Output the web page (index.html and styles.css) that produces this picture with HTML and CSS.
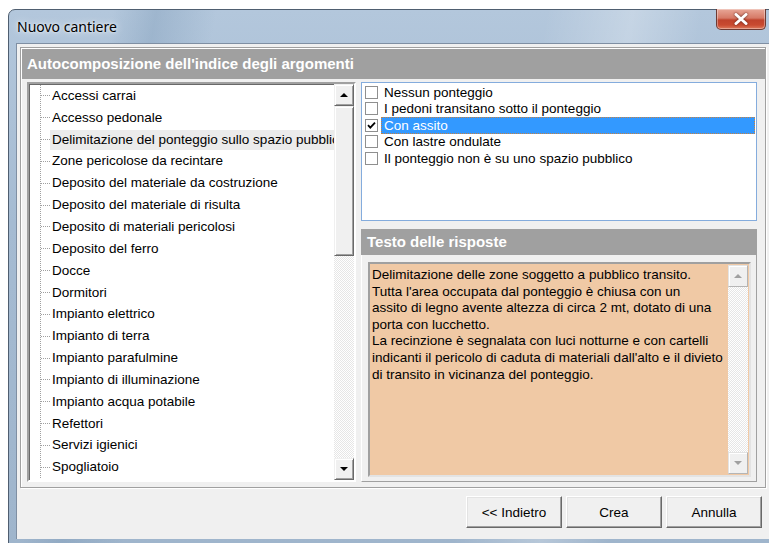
FILE: index.html
```html
<!DOCTYPE html>
<html lang="it">
<head>
<meta charset="utf-8">
<title>Nuovo cantiere</title>
<link rel="stylesheet" href="styles.css">
</head>
<body>
<div class="window">
  <div class="titlebar">
    <span class="title">Nuovo cantiere</span>
    <div class="close-btn">
      <svg width="16" height="12" viewBox="0 0 16 12"><path d="M3 1.5 L13 10.5 M13 1.5 L3 10.5" stroke="#fff" stroke-width="3" stroke-linecap="round"/></svg>
    </div>
  </div>
  <div class="client">
    <div class="group">
      <div class="group-header">Autocomposizione dell'indice degli argomenti</div>
      <div class="group-body">
        <div class="tree-box">
          <div class="tree-view">
            <ul class="tree">
              <li><span>Accessi carrai</span></li>
              <li><span>Accesso pedonale</span></li>
              <li class="current"><span>Delimitazione del ponteggio sullo spazio pubblico</span></li>
              <li><span>Zone pericolose da recintare</span></li>
              <li><span>Deposito del materiale da costruzione</span></li>
              <li><span>Deposito del materiale di risulta</span></li>
              <li><span>Deposito di materiali pericolosi</span></li>
              <li><span>Deposito del ferro</span></li>
              <li><span>Docce</span></li>
              <li><span>Dormitori</span></li>
              <li><span>Impianto elettrico</span></li>
              <li><span>Impianto di terra</span></li>
              <li><span>Impianto parafulmine</span></li>
              <li><span>Impianto di illuminazione</span></li>
              <li><span>Impianto acqua potabile</span></li>
              <li><span>Refettori</span></li>
              <li><span>Servizi igienici</span></li>
              <li><span>Spogliatoio</span></li>
            </ul>
          </div>
          <div class="vscroll">
            <div class="sb-btn"><span class="arrow up"></span></div>
            <div class="sb-thumb"></div>
            <div class="sb-track"></div>
            <div class="sb-btn"><span class="arrow down"></span></div>
          </div>
        </div>
        <div class="right-col">
          <ul class="check-list">
            <li><span class="cb"></span><span class="label">Nessun ponteggio</span></li>
            <li><span class="cb"></span><span class="label">I pedoni transitano sotto il ponteggio</span></li>
            <li class="selected"><span class="cb checked"><svg width="9" height="9" viewBox="0 0 9 9"><path d="M1 4.2 L3.3 6.6 L8 1.6" fill="none" stroke="#000" stroke-width="1.8"/></svg></span><span class="label">Con assito</span></li>
            <li><span class="cb"></span><span class="label">Con lastre ondulate</span></li>
            <li><span class="cb"></span><span class="label">Il ponteggio non è su uno spazio pubblico</span></li>
          </ul>
          <div class="answers-header">Testo delle risposte</div>
          <div class="answers-panel">
            <div class="answer-box">
              <div class="answer-text">Delimitazione delle zone soggetto a pubblico transito.<br>Tutta l'area occupata dal ponteggio è chiusa con un<br>assito di legno avente altezza di circa 2 mt, dotato di una<br>porta con lucchetto.<br>La recinzione è segnalata con luci notturne e con cartelli<br>indicanti il pericolo di caduta di materiali dall'alto e il divieto<br>di transito in vicinanza del ponteggio.</div>
              <div class="vscroll disabled">
                <div class="sb-btn"><span class="arrow up"></span></div>
                <div class="sb-track"></div>
                <div class="sb-btn"><span class="arrow down"></span></div>
              </div>
            </div>
          </div>
        </div>
      </div>
    </div>
    <div class="buttons">
      <button class="btn">&lt;&lt; Indietro</button>
      <button class="btn">Crea</button>
      <button class="btn">Annulla</button>
    </div>
  </div>
</div>
</body>
</html>
```
FILE: styles.css
```css
html, body {
  margin: 0;
  padding: 0;
}

body {
  width: 769px;
  height: 543px;
  overflow: hidden;
  background: #ffffff;
  font-family: "Liberation Sans", Arial, sans-serif;
  font-size: 13.5px;
  color: #000;
}

ul {
  list-style: none;
  margin: 0;
  padding: 0;
}

/* Window frame (Aero glass) */
.window {
  box-sizing: border-box;
  margin: 9px 0 0 8px;
  width: 775px;
  height: 536px;
  border: 1px solid #4f5e70;
  border-radius: 7px 7px 0 0;
  background:
    linear-gradient(100deg, rgba(255,255,255,0) 0%, rgba(255,255,255,0) 12%, rgba(120,150,180,0.35) 17%, rgba(255,255,255,0) 24%, rgba(255,255,255,0) 62%, rgba(255,255,255,0.25) 72%, rgba(255,255,255,0) 80%),
    linear-gradient(180deg, #b3c7dc 0%, #a5bbd2 40%, #9fb5cc 100%);
  padding: 0 0 5px 7px;
  display: flex;
  flex-direction: column;
}

.titlebar {
  height: 33px;
  display: flex;
  align-items: flex-start;
  flex: none;
}

.title {
  font-family: "Noto Sans", "Open Sans", sans-serif;
  font-size: 14px;
  color: #000;
  margin: 7px 0 0 1px;
  text-shadow: 0 0 8px rgba(255,255,255,0.9), 0 0 3px rgba(255,255,255,0.9);
}

.close-btn {
  margin-left: auto;
  margin-right: 16px;
  margin-top: -1px;
  width: 50px;
  height: 21px;
  box-sizing: border-box;
  border: 1px solid #6e3a32;
  border-top: none;
  border-radius: 0 0 5px 5px;
  background: linear-gradient(180deg, #e8a797 0%, #d67a67 45%, #c0432c 55%, #c94a30 80%, #dd7a5c 100%);
  display: flex;
  align-items: center;
  justify-content: center;
  box-shadow: inset 0 0 0 1px rgba(255,255,255,0.35);
}

.close-btn svg {
  filter: drop-shadow(0 0 1px #5a2016);
}

/* Client area */
.client {
  flex: 1;
  background: #f0f0f0;
  border: 1px solid #7f8fa3;
  border-right: none;
  border-bottom: none;
  display: flex;
  flex-direction: column;
}

.group {
  box-sizing: border-box;
  margin: 3px 0 0 3px;
  width: 746px;
  height: 441px;
  border: 1px solid #a0a0a0;
  box-shadow: inset 1px 1px 0 #ffffff, 1px 1px 0 #ffffff;
  display: flex;
  flex-direction: column;
}

.group-header {
  height: 30px;
  margin: 1px 0 0 1px;
  background: #a0a0a0;
  color: #fff;
  font-weight: bold;
  font-size: 15px;
  line-height: 30px;
  padding-left: 5px;
  flex: none;
}

.group-body {
  flex: 1;
  display: flex;
  gap: 5px;
  padding: 3px 7px 5px 6px;
  min-height: 0;
}

/* Tree view */
.tree-box {
  box-sizing: border-box;
  width: 329px;
  border-style: solid;
  border-width: 2px;
  border-color: #a0a0a0 #ffffff #ffffff #a0a0a0;
  box-shadow: inset 1px 1px 0 #696969;
  background: #fff;
  display: flex;
  overflow: hidden;
}

.tree-view {
  flex: 1;
  overflow: hidden;
  padding-top: 1px;
}

.tree {
  margin-left: 11px;
  border-left: 1px dotted #a0a0a0;
}

.tree li {
  height: 21.85px;
  display: flex;
  align-items: center;
  white-space: nowrap;
}

.tree li::before {
  content: "";
  width: 9px;
  flex: none;
  border-top: 1px dotted #a0a0a0;
}

.tree li span {
  padding: 2px 2px 3px 2px;
}

.tree li.current span {
  background: #ebebeb;
  flex: 1;
  overflow: hidden;
}

/* Scrollbars */
.vscroll {
  width: 20px;
  flex: none;
  display: flex;
  flex-direction: column;
}

.sb-btn,
.sb-thumb {
  box-sizing: border-box;
  background: #f0f0f0;
  border-style: solid;
  border-width: 1px;
  border-color: #f0f0f0 #696969 #696969 #f0f0f0;
  box-shadow: inset 1px 1px 0 #ffffff, inset -1px -1px 0 #a0a0a0;
  flex: none;
}

.sb-btn {
  height: 22px;
  display: flex;
  align-items: center;
  justify-content: center;
}

.sb-thumb {
  height: 150px;
}

.sb-track {
  flex: 1;
  background: repeating-conic-gradient(#ffffff 0 25%, #e6e6e6 0 50%) 0 0 / 2px 2px;
}

.arrow {
  width: 0;
  height: 0;
  border-left: 4px solid transparent;
  border-right: 4px solid transparent;
}

.arrow.up {
  border-bottom: 4px solid #000;
}

.arrow.down {
  border-top: 4px solid #000;
}

.vscroll.disabled .arrow.up {
  border-bottom-color: #a0a0a0;
}

.vscroll.disabled .arrow.down {
  border-top-color: #a0a0a0;
}

.vscroll.disabled .sb-btn {
  border-color: #e3e3e3 #b5b5b5 #b5b5b5 #e3e3e3;
  box-shadow: inset 1px 1px 0 #ffffff;
}

/* Right column */
.right-col {
  width: 396px;
  display: flex;
  flex-direction: column;
}

.check-list {
  box-sizing: border-box;
  height: 139px;
  border: 1px solid #84acdd;
  background: #fff;
  padding: 1px 1px 0 3px;
  flex: none;
}

.check-list li {
  height: 16.5px;
  display: flex;
  align-items: center;
  white-space: nowrap;
}

.cb {
  box-sizing: border-box;
  width: 13px;
  height: 13px;
  border: 1px solid #8f8f8f;
  background: #fff;
  flex: none;
  display: flex;
  align-items: center;
  justify-content: center;
}

.label {
  margin-left: 3px;
  padding-left: 2px;
  line-height: 15px;
  flex: 1;
  border: 1px solid transparent;
}

.check-list li.selected .label {
  background: #3399ff;
  color: #fff;
  border: 1px dotted #c68142;
}

.answers-header {
  margin-top: 8px;
  height: 26px;
  background: #a0a0a0;
  color: #fff;
  font-weight: bold;
  font-size: 15px;
  line-height: 26px;
  padding-left: 6px;
  flex: none;
}

.answers-panel {
  flex: 1;
  box-sizing: border-box;
  border: 1px solid #ffffff;
  border-top: none;
  border-right-color: #a0a0a0;
  border-bottom-color: #a0a0a0;
  padding: 7px 5px 4px 6px;
  display: flex;
}

.answer-box {
  flex: 1;
  background: #f0c9a5;
  border-style: solid;
  border-width: 2px;
  border-color: #a0a0a0 #e3e3e3 #e3e3e3 #a0a0a0;
  display: flex;
  padding: 1px 1px 1px 0;
}

.answer-text {
  flex: 1;
  padding: 2px 0 0 2px;
  line-height: 16.6px;
  white-space: nowrap;
  overflow: hidden;
}

/* Dialog buttons */
.buttons {
  width: 745px;
  margin: 8px 0 0 3px;
  display: flex;
  justify-content: flex-end;
  gap: 4px;
  padding-right: 3px;
  box-sizing: border-box;
}

.btn {
  box-sizing: border-box;
  width: 96px;
  height: 32px;
  font-family: "Liberation Sans", Arial, sans-serif;
  font-size: 13.5px;
  color: #000;
  background: #f0f0f0;
  border-style: solid;
  border-width: 1px;
  border-color: #ffffff #696969 #696969 #ffffff;
  box-shadow: inset -1px -1px 0 #a0a0a0, inset 1px 1px 0 #e3e3e3;
  padding: 0;
}
```
